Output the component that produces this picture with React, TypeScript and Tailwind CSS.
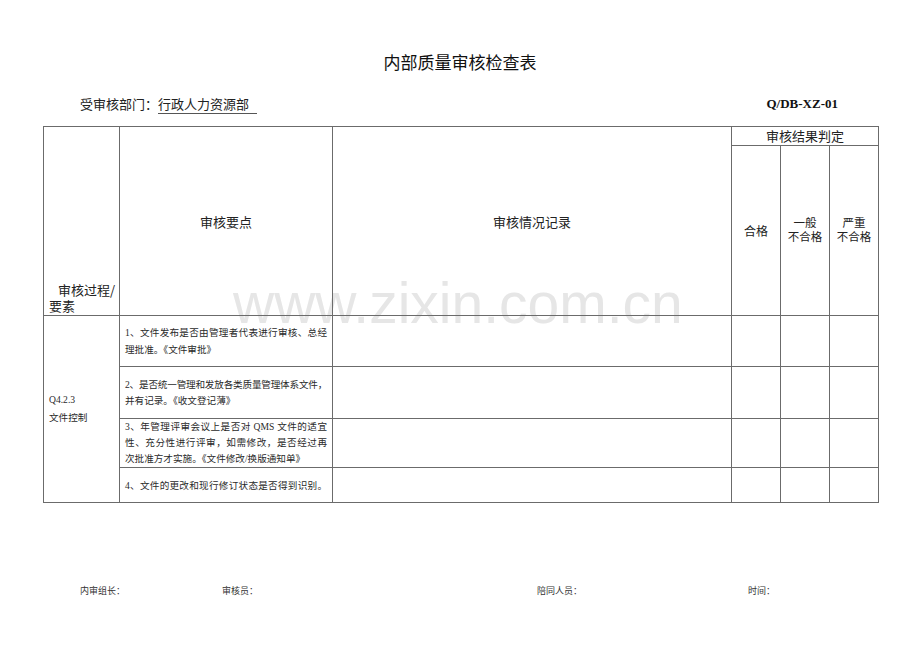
const serif = "font-['Liberation_Serif','Noto_Sans_CJK_SC',serif]";
const sans = "font-['Noto_Sans_CJK_SC','Liberation_Sans',sans-serif]";

const cell = 'border border-[#6b6b6b] p-0 leading-[16px]';

type Item = { lines: string[]; h: string; lh: string; tight?: number[] };

const items: Item[] = [
  { lines: ['1、文件发布是否由管理者代表进行审核、总经', '理批准。《文件审批》'], h: 'h-[51px]', lh: 'leading-[17px]' },
  {
    lines: ['2、是否统一管理和发放各类质量管理体系文件，', '并有记录。《收文登记薄》'],
    h: 'h-[52px]',
    lh: 'leading-[16px]',
    tight: [0],
  },
  {
    lines: ['3、年管理评审会议上是否对 QMS 文件的适宜', '性、充分性进行评审，如需修改，是否经过再', '次批准方才实施。《文件修改/换版通知单》'],
    h: 'h-[49px]',
    lh: 'leading-[16px]',
  },
  { lines: ['4、文件的更改和现行修订状态是否得到识别。'], h: 'h-[35px]', lh: 'leading-[17px]' },
];

function Lines({ item }: { item: Item }) {
  return (
    <div className={`${serif} px-[5px] text-[9.6px] ${item.lh} text-[#2a2a2a]`}>
      {item.lines.map((l, i) => {
        const last = i === item.lines.length - 1 && item.lines.length > 1;
        const tight = item.tight?.includes(i);
        return (
          <div
            key={i}
            className={`whitespace-nowrap ${last ? 'text-left' : 'text-justify [text-align-last:justify]'} ${tight ? 'tracking-[-0.35px]' : ''}`}
          >
            {l}
          </div>
        );
      })}
    </div>
  );
}

export default function App() {
  return (
    <div className="relative w-[920px] h-[651px] text-[#1a1a1a]">
      {/* watermark, sits behind the table */}
      <div className="absolute -z-10 left-[233px] top-[283px] font-['Liberation_Sans',sans-serif] text-[57px] leading-[40px] text-[#e6e6e6] whitespace-nowrap select-none">
        www.zixin.com.cn
      </div>

      <div className="pt-[50px]">
        <h1 className={`${sans} text-center text-[17px] leading-[24px] font-normal text-[#111]`}>
          内部质量审核检查表
        </h1>
      </div>

      <div className="mt-[20px] flex items-center justify-between pl-[80px] pr-[82px] h-[20px]">
        <div className={`${sans} text-[13px] leading-[20px] text-[#222]`}>
          受审核部门：
          <span className="border-b border-[#555] pr-[8px]">行政人力资源部</span>
        </div>
        <div className="font-['Liberation_Serif',serif] font-bold text-[13px] leading-[20px] text-[#111]">
          Q/DB-XZ-01
        </div>
      </div>

      <div className="mt-[12px] px-[43px]">
        <table className="w-[835px] table-fixed border-collapse">
          <colgroup>
            <col className="w-[76px]" />
            <col className="w-[213px]" />
            <col className="w-[399px]" />
            <col className="w-[49px]" />
            <col className="w-[49px]" />
            <col className="w-[49px]" />
          </colgroup>
          <tbody>
            <tr className="h-[19px]">
              <td rowSpan={2} className={`${cell} align-bottom`}>
                <div className={`${sans} pb-[1px] text-[13px] leading-[16px] whitespace-nowrap text-[#222]`}>
                  <div className="pl-[14px]">审核过程/</div>
                  <div className="pl-[5px]">要素</div>
                </div>
              </td>
              <td rowSpan={2} className={`${cell} text-center align-middle`}>
                <span className={`${sans} text-[13px] text-[#222]`}>审核要点</span>
              </td>
              <td rowSpan={2} className={`${cell} text-center align-middle`}>
                <span className={`${sans} text-[13px] text-[#222]`}>审核情况记录</span>
              </td>
              <td colSpan={3} className={`${cell} text-center align-middle`}>
                <div className={`${sans} h-[17px] text-[13px] leading-[15px] text-[#222]`}>审核结果判定</div>
              </td>
            </tr>
            <tr className="h-[170px]">
              <td className={`${cell} text-center align-middle`}>
                <span className={`${sans} text-[12px] text-[#222]`}>合格</span>
              </td>
              <td className={`${cell} text-center align-middle`}>
                <div className={`${sans} pb-[4px] text-[11.5px] leading-[14px] text-[#222]`}>
                  <div>一般</div>
                  <div>不合格</div>
                </div>
              </td>
              <td className={`${cell} text-center align-middle`}>
                <div className={`${sans} pb-[4px] text-[11.5px] leading-[14px] text-[#222]`}>
                  <div>严重</div>
                  <div>不合格</div>
                </div>
              </td>
            </tr>
            {items.map((item, i) => (
              <tr key={i} className={item.h}>
                {i === 0 && (
                  <td rowSpan={4} className={`${cell} align-middle`}>
                    <div className={`${serif} px-[5px] text-[9.6px] leading-[18px] text-[#2a2a2a]`}>
                      <div>Q4.2.3</div>
                      <div>文件控制</div>
                    </div>
                  </td>
                )}
                <td className={`${cell} align-middle`}>
                  <Lines item={item} />
                </td>
                <td className={cell}></td>
                <td className={cell}></td>
                <td className={cell}></td>
                <td className={cell}></td>
              </tr>
            ))}
          </tbody>
        </table>
      </div>

      <div className={`${serif} mt-[81px] flex pl-[80px] text-[9px] leading-[14px] text-[#333]`}>
        <span className="w-[142px]">内审组长：</span>
        <span className="w-[315px]">审核员：</span>
        <span className="w-[211px]">陪同人员：</span>
        <span>时间：</span>
      </div>
    </div>
  );
}
